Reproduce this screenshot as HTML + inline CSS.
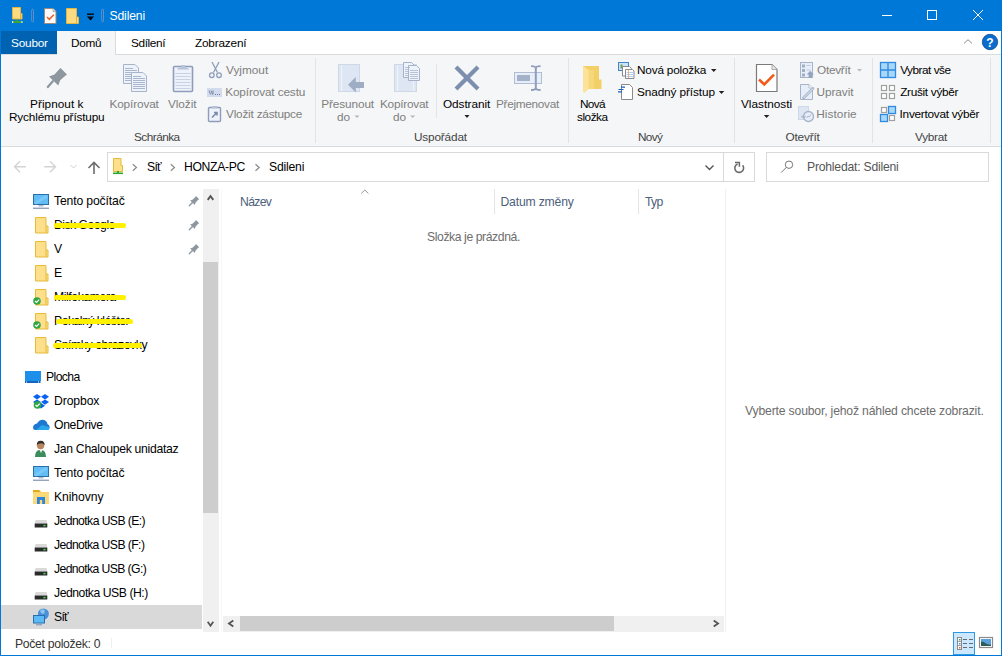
<!DOCTYPE html>
<html><head><meta charset="utf-8">
<style>
html,body{margin:0;padding:0;width:1002px;height:656px;overflow:hidden;background:#fff;}
body{position:relative;font-family:"Liberation Sans",sans-serif;font-size:11.5px;color:#000;}
.a{position:absolute;}
.t{position:absolute;white-space:nowrap;line-height:14px;font-size:11.8px;}
.d{color:#7e7e7e;}
.L{font-size:12.2px;}
.g{color:#444;}
#ic{position:absolute;left:0;top:0;}
</style></head><body>
<!-- window frame -->
<div class="a" style="left:0;top:0;width:1002px;height:31px;background:#0078d7"></div>

<!-- title -->
<div class="t L" style="left:109.5px;top:9px;color:#fff;letter-spacing:-0.15px">Sdileni</div>

<!-- tabs row -->
<div class="a" style="left:1px;top:31px;width:56px;height:23px;background:#0063b1"></div>
<div class="t" style="left:11.0px;top:36px;color:#fff;letter-spacing:-0.2px">Soubor</div>
<div class="a" style="left:1px;top:54px;width:1000px;height:1px;background:#dadbdc"></div>
<div class="a" style="left:57px;top:31px;width:58px;height:24px;background:#f5f6f7;border-right:1px solid #dadbdc"></div>
<div class="t" style="left:71.0px;top:36px;letter-spacing:-0.334px">Domů</div>
<div class="t" style="left:131.0px;top:36px;letter-spacing:-0.366px">Sdílení</div>
<div class="t" style="left:195.0px;top:36px;letter-spacing:-0.197px">Zobrazení</div>

<!-- ribbon body -->
<div class="a" style="left:1px;top:55px;width:1000px;height:91px;background:#f5f6f7"></div>
<div class="a" style="left:1px;top:146px;width:1000px;height:1px;background:#dadbdc"></div>
<!-- group separators -->
<div class="a" style="left:315px;top:58px;width:1px;height:85px;background:#e2e3e4"></div>
<div class="a" style="left:568px;top:58px;width:1px;height:85px;background:#e2e3e4"></div>
<div class="a" style="left:734px;top:58px;width:1px;height:85px;background:#e2e3e4"></div>
<div class="a" style="left:872px;top:58px;width:1px;height:85px;background:#e2e3e4"></div>
<div class="a" style="left:990px;top:58px;width:1px;height:85px;background:#e2e3e4"></div>
<div class="a" style="left:436px;top:64px;width:1px;height:54px;background:#e2e3e4"></div>

<!-- Schránka -->
<div class="t" style="left:30.0px;top:97px;letter-spacing:0.04px">Připnout k</div>
<div class="t" style="left:9.0px;top:110px;letter-spacing:-0.167px">Rychlému přístupu</div>
<div class="t d" style="left:109.4px;top:97px;letter-spacing:-0.125px">Kopírovat</div>
<div class="t d" style="left:168.0px;top:97px;letter-spacing:-0.08px">Vložit</div>
<div class="t d" style="left:226.0px;top:63px;letter-spacing:0.0px">Vyjmout</div>
<div class="t d" style="left:225.2px;top:85px;letter-spacing:-0.129px">Kopírovat cestu</div>
<div class="t d" style="left:226.0px;top:107px;letter-spacing:-0.214px">Vložit zástupce</div>
<div class="t g" style="left:134.0px;top:130px;letter-spacing:-0.53px">Schránka</div>

<!-- Uspořádat -->
<div class="t d" style="left:321.2px;top:97px;letter-spacing:-0.103px">Přesunout</div>
<div class="t d" style="left:337px;top:110px">do</div>
<div class="t d" style="left:380.0px;top:97px;letter-spacing:-0.25px">Kopírovat</div>
<div class="t d" style="left:393px;top:110px">do</div>
<div class="t" style="left:443.0px;top:97px;letter-spacing:-0.078px">Odstranit</div>
<div class="t d" style="left:496.0px;top:97px;letter-spacing:-0.3px">Přejmenovat</div>
<div class="t g" style="left:414.0px;top:130px;letter-spacing:-0.172px">Uspořádat</div>

<!-- Nový -->
<div class="t" style="left:580.0px;top:97px;letter-spacing:-0.7px">Nová</div>
<div class="t" style="left:577.0px;top:110px;letter-spacing:-0.48px">složka</div>
<div class="t" style="left:637.0px;top:63px;letter-spacing:-0.199px">Nová položka</div>
<div class="t" style="left:637.0px;top:85px;letter-spacing:-0.108px">Snadný přístup</div>
<div class="t g" style="left:638.0px;top:130px;letter-spacing:-0.7px">Nový</div>

<!-- Otevřít -->
<div class="t" style="left:741.0px;top:97px;letter-spacing:0.0px">Vlastnosti</div>
<div class="t d" style="left:817.0px;top:63px;letter-spacing:-0.268px">Otevřít</div>
<div class="t d" style="left:816.5px;top:85px;letter-spacing:-0.067px">Upravit</div>
<div class="t d" style="left:816.2px;top:107px;letter-spacing:0.07px">Historie</div>
<div class="t g" style="left:785.5px;top:130px;letter-spacing:-0.167px">Otevřít</div>

<!-- Vybrat -->
<div class="t" style="left:900.2px;top:63px;letter-spacing:-0.499px">Vybrat vše</div>
<div class="t" style="left:900.2px;top:85px;letter-spacing:-0.31px">Zrušit výběr</div>
<div class="t" style="left:899.6px;top:107px;letter-spacing:-0.267px">Invertovat výběr</div>
<div class="t g" style="left:915.0px;top:130px;letter-spacing:-0.28px">Vybrat</div>

<!-- address row -->
<div class="a" style="left:107px;top:152px;width:646px;height:28px;border:1px solid #d9d9d9"></div>
<div class="a" style="left:723px;top:153px;width:1px;height:28px;background:#d9d9d9"></div>
<div class="t L" style="left:147.0px;top:160px;letter-spacing:-0.7px">Síť</div>
<div class="t L" style="left:184.0px;top:160px;letter-spacing:-0.343px">HONZA-PC</div>
<div class="t L" style="left:269.0px;top:160px;letter-spacing:-0.199px">Sdileni</div>
<div class="a" style="left:766px;top:152px;width:221px;height:28px;border:1px solid #d9d9d9"></div>
<div class="t L" style="left:807.0px;top:160px;color:#555;letter-spacing:-0.224px">Prohledat: Sdileni</div>

<!-- nav pane -->
<div class="a" style="left:1px;top:605px;width:201px;height:24px;background:#d9d9d9"></div>
<div class="t L" style="left:54.0px;top:194px;letter-spacing:-0.146px">Tento počítač</div>
<div class="t L" style="left:54px;top:218px;letter-spacing:-0.5px">Disk Google</div>
<div class="t L" style="left:54px;top:242px">V</div>
<div class="t L" style="left:54px;top:266px">E</div>
<div class="t L" style="left:54px;top:290px;letter-spacing:-0.4px">Milfokamera</div>
<div class="t L" style="left:54px;top:314px;letter-spacing:-0.5px">Pokalný kléšter</div>
<div class="t L" style="left:54px;top:338px;letter-spacing:-0.4px">Snímky obrazovky</div>
<div class="t L" style="left:46.0px;top:370px;letter-spacing:-0.6px">Plocha</div>
<div class="t L" style="left:54.0px;top:394px;letter-spacing:-0.1px">Dropbox</div>
<div class="t L" style="left:54.0px;top:418px;letter-spacing:-0.343px">OneDrive</div>
<div class="t L" style="left:54.0px;top:442px;letter-spacing:-0.292px">Jan Chaloupek unidataz</div>
<div class="t L" style="left:54.0px;top:466px;letter-spacing:-0.162px">Tento počítač</div>
<div class="t L" style="left:54.0px;top:490px;letter-spacing:-0.093px">Knihovny</div>
<div class="t L" style="left:54.0px;top:514px;letter-spacing:-0.58px">Jednotka USB (E:)</div>
<div class="t L" style="left:54.0px;top:538px;letter-spacing:-0.581px">Jednotka USB (F:)</div>
<div class="t L" style="left:54.0px;top:562px;letter-spacing:-0.592px">Jednotka USB (G:)</div>
<div class="t L" style="left:54.0px;top:586px;letter-spacing:-0.455px">Jednotka USB (H:)</div>
<div class="t L" style="left:54.0px;top:610px;letter-spacing:-0.7px">Síť</div>
<!-- yellow marks -->
<div class="a" style="left:54px;top:223px;width:72px;height:5px;border-radius:3px;background:#fff100"></div>
<div class="a" style="left:54px;top:295px;width:72px;height:5px;border-radius:3px;background:#fff100"></div>
<div class="a" style="left:56px;top:319px;width:77px;height:5px;border-radius:3px;background:#fff100"></div>
<div class="a" style="left:53px;top:343px;width:89px;height:5px;border-radius:3px;background:#fff100"></div>

<!-- nav scrollbar -->
<div class="a" style="left:203px;top:189px;width:16px;height:443px;background:#f0f0f0"></div>
<div class="a" style="left:203px;top:262px;width:15px;height:251px;background:#cdcdcd"></div>
<div class="a" style="left:221px;top:189px;width:1px;height:443px;background:#f7f7f7"></div>

<!-- columns -->
<div class="t L" style="left:240.0px;top:195px;color:#4c607a;letter-spacing:-0.65px">Název</div>
<div class="a" style="left:494px;top:189px;width:1px;height:25px;background:#e5e5e5"></div>
<div class="t L" style="left:500.5px;top:195px;color:#4c607a;letter-spacing:-0.18px">Datum změny</div>
<div class="a" style="left:638px;top:189px;width:1px;height:25px;background:#e5e5e5"></div>
<div class="t L" style="left:645.0px;top:195px;color:#4c607a;letter-spacing:-0.7px">Typ</div>
<div class="t L" style="left:427.0px;top:230px;color:#6d6d6d;letter-spacing:-0.412px">Složka je prázdná.</div>
<div class="a" style="left:725px;top:189px;width:1px;height:443px;background:#f0f0f0"></div>
<div class="t L" style="left:745.0px;top:404px;color:#6d6d6d;letter-spacing:-0.168px">Vyberte soubor, jehož náhled chcete zobrazit.</div>

<!-- h scrollbar -->
<div class="a" style="left:223px;top:616px;width:501px;height:16px;background:#f0f0f0"></div>
<div class="a" style="left:240px;top:616px;width:374px;height:15px;background:#cdcdcd"></div>

<!-- status bar -->
<div class="t L" style="left:15.0px;top:637px;color:#333;letter-spacing:-0.308px">Počet položek: 0</div>
<div class="a" style="left:111px;top:638px;width:1px;height:10px;background:#f0f0f0"></div>
<div class="a" style="left:953px;top:632px;width:20px;height:21px;border:1px solid #2f9ae2;background:#cce8ff"></div>

<div class="a" style="left:0;top:0;width:1px;height:656px;background:#0078d7"></div>
<div class="a" style="left:1001px;top:0;width:1px;height:656px;background:#0078d7"></div>
<div class="a" style="left:0;top:655px;width:1002px;height:1px;background:#0078d7"></div>

<svg id="ic" width="1002" height="656" viewBox="0 0 1002 656">
<!-- QAT -->
<g>
 <path d="M12.5,7.5 h8 v6 h1.5 v5.5 h-9.5z" fill="#fbdc82" stroke="#e2b440" stroke-width="1"/>
 <path d="M20.5,13.5 v5.5" stroke="#e2b440" stroke-width="1"/>
 <rect x="16.5" y="19.5" width="1.6" height="2" fill="#3aa63a"/>
 <rect x="12" y="21" width="10.5" height="2" fill="#3aa63a"/>
 <rect x="12" y="21" width="1.2" height="2" fill="#cfe8cf"/>
 <rect x="21.3" y="21" width="1.2" height="2" fill="#cfe8cf"/>
 <rect x="31.7" y="9.2" width="1.8" height="12.6" rx="0.9" fill="#1a68b8" stroke="#6aa8e0" stroke-width="0.7"/>
 <path d="M44.5,8.5 h8.5 l3,3 v12 h-11.5z" fill="#fafafa" stroke="#9a8a80" stroke-width="1"/>
 <path d="M53,8.5 v3 h3" fill="#e0e0e0" stroke="#9a8a80" stroke-width="0.6"/>
 <path d="M47,17 l2.3,2.3 l4.5,-4.5" fill="none" stroke="#f0622a" stroke-width="1.6"/>
 <path d="M66.5,8.5 h10 v8.5 h2 v6.5 h-12z" fill="#fbdc82" stroke="#e2b440" stroke-width="1"/>
 <path d="M76.5,17 v6.5" stroke="#e2b440" stroke-width="1"/>
 <rect x="87" y="13.5" width="7" height="1.3" fill="#000"/>
 <path d="M87,16.5 h7 l-3.5,4z" fill="#000"/>
 <rect x="101.7" y="9.2" width="1.8" height="12.6" rx="0.9" fill="#1a68b8" stroke="#6aa8e0" stroke-width="0.7"/>
</g>
<!-- window controls -->
<g stroke="#fff" stroke-width="1" fill="none">
 <path d="M882,15.5 h10"/>
 <rect x="927.5" y="10.5" width="9" height="9"/>
 <path d="M973,10 l10,10 M983,10 l-10,10"/>
</g>
<!-- ribbon chevron + help -->
<path d="M964,43.5 l4,-3.8 l4,3.8" fill="none" stroke="#8a8a8a" stroke-width="1"/>
<circle cx="990" cy="42" r="7.7" fill="#0a6ccd" stroke="#0b4c93" stroke-width="0.8"/>
<text x="990" y="47" font-family="Liberation Sans" font-weight="bold" font-size="12" fill="#fff" text-anchor="middle">?</text>

<!-- pin -->
<path d="M60.5,68 L67,74.5 L65,76 L60.2,80.3 L58.3,85.6 L49,76.6 L54.5,74.6 L58.8,69.8 Z" fill="#8e979e"/>
<path d="M52.8,81.2 L47.8,87" stroke="#8e979e" stroke-width="2.2" stroke-linecap="round"/>
<!-- copy -->
<g stroke="#a6b3c9" stroke-width="1" fill="#eef2fa">
 <path d="M123.5,64.5 h11.5 l3.5,3.5 v15.5 h-15z"/>
 <path d="M131.5,72.5 h11.5 l3.5,3.5 v15.5 h-15z"/>
</g>
<g stroke="#aab6cb" stroke-width="1">
 <path d="M125,68.5h8 M125,70.5h12 M125,72.5h6 M125,74.5h6 M125,76.5h6 M125,78.5h6 M125,80.5h6"/>
 <path d="M133,76.5h8 M133,78.5h12 M133,80.5h12 M133,82.5h12 M133,84.5h12 M133,86.5h12 M133,88.5h12"/>
</g>
<!-- paste clipboard -->
<rect x="173.5" y="66.5" width="19" height="25" rx="1" fill="#eef2fa" stroke="#8f9dbb" stroke-width="1.6"/>
<path d="M177,69.5 h12 l-1.5,-2 h-2.5 v-2.5 h-4 v2.5 h-2.5z" fill="#b7c3d8"/>
<g stroke="#c9d2e2" stroke-width="1">
 <path d="M175.5,73.5h15 M175.5,76.5h15 M175.5,79.5h15 M175.5,82.5h15 M175.5,85.5h15 M175.5,88.5h15"/>
</g>
<!-- scissors -->
<g stroke="#8f9dbb" stroke-width="1.3" fill="none">
 <path d="M212,62 L217.5,72.5 M219,62 L213.5,72.5"/>
 <circle cx="211.8" cy="75.2" r="2.3"/>
 <circle cx="219" cy="75.2" r="2.3"/>
</g>
<!-- kopirovat cestu -->
<rect x="207" y="88" width="15" height="9" fill="#d3dcec"/>
<path d="M209,90.5 l1.5,4 M211,90.5 l1.5,4 M213,90.5 v4" stroke="#6e7f9f" stroke-width="0.9"/>
<path d="M215,94.5h1 M217,94.5h1 M219,94.5h1" stroke="#6e7f9f" stroke-width="1"/>
<!-- vlozit zastupce -->
<rect x="208.5" y="107.5" width="12" height="14" rx="1" fill="#eef2fa" stroke="#8f9dbb" stroke-width="1.4"/>
<rect x="212" y="106" width="5" height="2.5" fill="#b7c3d8"/>
<path d="M212,117.5 l5,-5 M214,112.5 h3 v3" stroke="#7a8aa8" stroke-width="1.6" fill="none"/>
<!-- presunout do -->
<rect x="338.5" y="64.5" width="21" height="27" fill="#dde6f2" stroke="#cdd8e8"/>
<path d="M341.5,65 v26" stroke="#eef2f9" stroke-width="1.2"/>
<path d="M348,84.7 L355.8,77 V82 H364 V88 H355.8 V92.5 Z" fill="#9eacc4"/>
<!-- kopirovat do -->
<rect x="394.5" y="64.5" width="22" height="27" fill="#dde6f2" stroke="#cdd8e8"/>
<path d="M397.5,65 v26 M413.5,80 v11" stroke="#eef2f9" stroke-width="1.2"/>
<g stroke="#a6b3c9" stroke-width="1" fill="#eef2fa">
 <path d="M403.5,62.5 h8 l3,3 v12 h-11z"/>
 <path d="M408.5,65.5 h8 l3,3 v12 h-11z"/>
</g>
<path d="M405,67.5h5 M405,69.5h4 M405,71.5h4 M405,73.5h4 M405,75.5h4 M410,70.5h8 M410,72.5h8 M410,74.5h8 M410,76.5h8 M410,78.5h8" stroke="#aab6cb" stroke-width="0.8"/>
<!-- odstranit X -->
<path d="M456,67 L478,89 M478,67 L456,89" stroke="#7d8fae" stroke-width="4.2"/>
<path d="M464.5,115 h5 l-2.5,3z" fill="#222"/>
<path d="M354.5,115.5 h5 l-2.5,2.5z" fill="#b5b5b5"/>
<path d="M410.2,115.5 h5 l-2.5,2.5z" fill="#b5b5b5"/>
<!-- prejmenovat -->
<rect x="514.5" y="72.5" width="27" height="11" fill="#e8eef9" stroke="#b0bdd3"/>
<rect x="517" y="75" width="13" height="6" fill="#a3b1c9"/>
<path d="M535.8,67 V89.5" stroke="#8f9dbb" stroke-width="2" fill="none"/><path d="M531,66.2 q4.8,0 4.8,2 q0,-2 4.8,-2 M531,90 q4.8,0 4.8,-2 q0,2 4.8,2" stroke="#8f9dbb" stroke-width="1.8" fill="none"/>
<!-- nova slozka -->
<path d="M583,66 H599 V79.5 H601.5 V89 H583 Z" fill="#f3cf68"/>
<path d="M588.7,70 H594 V89 H588.7Z" fill="#f7d878"/>
<path d="M583,66 L588.7,70 V89 L584.5,93 L583,92 Z" fill="#fde39a"/>
<!-- nova polozka -->
<rect x="618.5" y="62.5" width="10" height="8" fill="#cde4f7" stroke="#3f87c8"/>
<rect x="620.5" y="64.5" width="2" height="4" fill="#6ba050"/>
<path d="M622.5,66.5 h7 l2,2 v7.5 h-9z" fill="#fff" stroke="#8a8a8a"/>
<path d="M625.5,69.5 h7 l1.5,1.5 v7.5 h-8.5z" fill="#fff" stroke="#8a8a8a"/>
<path d="M626.5,72.5h7 M626.5,74.5h7 M626.5,76.5h7" stroke="#9cc3e8" stroke-width="0.8"/>
<path d="M628.5,70 v8" stroke="#f0a080" stroke-width="0.8"/>
<!-- snadny pristup -->
<path d="M621.5,84.5 h8 l3,3 v12 h-11z" fill="#fff" stroke="#8a8a8a"/>
<path d="M621,87.2 h4 M618.5,89.5 h5 M618,91.8 h4" stroke="#1a62b8" stroke-width="1.2"/>
<path d="M711,69 h5.5 l-2.75,3z" fill="#222"/>
<path d="M718.8,91 h5.5 l-2.75,3z" fill="#222"/>
<!-- vlastnosti -->
<path d="M756.5,64.5 h15.5 l5,5 v22 h-20.5z" fill="#fff" stroke="#7a7a7a" stroke-width="1.2"/>
<path d="M772,64.5 v5 h5" fill="#e8e8e8" stroke="#9a9a9a" stroke-width="0.8"/>
<path d="M759,79.5 L764.3,84.4 L774,74.6" fill="none" stroke="#f25a1c" stroke-width="2.6"/>
<path d="M763.8,115 h5.6 l-2.8,3z" fill="#222"/>
<!-- otevrit small -->
<rect x="800.5" y="62.5" width="12" height="15" fill="#e8eef9" stroke="#a6b3c9"/>
<path d="M802,64.5h3v3h-3z M802,69h3v3h-3z M802,73.5h3v3h-3z" fill="#a0aec6"/>
<path d="M806.5,65.5h4 M806.5,70h4" stroke="#c0cadb"/>
<path d="M808.6,78 v-3.6 h-1.9 l3.6,-3.6 l3.6,3.6 h-1.9 v3.6z" fill="#94a3bf"/>
<path d="M857,69 h5 l-2.5,2.5z" fill="#b8b8b8"/>
<!-- upravit -->
<path d="M800.5,84.5 h8.5 l3.5,3.5 v11.5 h-12z" fill="#e8eef9" stroke="#a6b3c9"/>
<path d="M809,84.5 v3.5 h3.5" fill="#fff" stroke="#a6b3c9" stroke-width="0.8"/>
<path d="M803.5,98 l9.5,-9.5" stroke="#a6b3c9" stroke-width="2.6" stroke-linecap="round"/>
<path d="M803.5,98 l9.5,-9.5" stroke="#e8eef9" stroke-width="1"/>
<!-- historie -->
<rect x="798.5" y="106.5" width="10" height="13" fill="#dde6f2" stroke="#cdd8e8"/>
<circle cx="808.5" cy="116.5" r="5" fill="#e8eef9" stroke="#a6b3c9" stroke-width="1.3"/>
<path d="M806.5,118 l1.5,-2 l1.2,1 l1.8,-2.5" stroke="#a6b3c9" stroke-width="0.9" fill="none"/>
<path d="M801.5,116 l2,2 l2,-2" stroke="#a6b3c9" stroke-width="1.1" fill="none"/>
<!-- vybrat vse -->
<rect x="880.5" y="62.5" width="15" height="15" fill="#a8d8f8" stroke="#2f8ae0" stroke-width="1.3"/>
<path d="M888,62 v16 M880,70 h16" stroke="#2f8ae0" stroke-width="1.3"/>
<g fill="#fff" stroke="#a0a0a0" stroke-width="1.2">
 <rect x="881.5" y="85.5" width="5" height="5"/><rect x="889.5" y="85.5" width="5" height="5"/>
 <rect x="881.5" y="93.5" width="5" height="5"/><rect x="889.5" y="93.5" width="5" height="5"/>
 <rect x="881.5" y="107.5" width="5" height="5"/><rect x="889.5" y="115.5" width="5" height="5"/>
</g>
<g fill="#a8d8f8" stroke="#2f8ae0" stroke-width="1.3">
 <rect x="888.5" y="106.5" width="7" height="7"/><rect x="880.5" y="114.5" width="7" height="7"/>
</g>
<path d="M14.5,166.7 H25.8 M20,161.2 L14.5,166.7 L20,172.2" stroke="#d3d3d3" stroke-width="1.4" fill="none"/>
<path d="M44.2,166.7 H55.5 M50,161.2 L55.5,166.7 L50,172.2" stroke="#d3d3d3" stroke-width="1.4" fill="none"/>
<path d="M70.5,165 L73.5,168 L76.5,165" stroke="#d0d0d0" stroke-width="1" fill="none"/>
<path d="M94,162.5 V174 M88.5,168 L94,162.5 L99.5,168" stroke="#6d6d6d" stroke-width="1.6" fill="none"/>
<path d="M113.5,158.5 h7.5 v7 h1.5 v6 h-9z" fill="#fddf8c" stroke="#e6bb3c"/>
<rect x="117" y="171" width="2" height="2" fill="#2ea82e"/><rect x="113" y="172.5" width="10" height="1.6" fill="#2ea82e"/>
<path d="M132.8,164.2 L136.5,167.5 L132.8,170.8" stroke="#8a8a8a" stroke-width="1.2" fill="none"/>
<path d="M170.8,164.2 L174.5,167.5 L170.8,170.8" stroke="#8a8a8a" stroke-width="1.2" fill="none"/>
<path d="M255.5,164.2 L259.2,167.5 L255.5,170.8" stroke="#8a8a8a" stroke-width="1.2" fill="none"/>
<path d="M705.5,165.5 L709.5,169.5 L713.5,165.5" stroke="#555" stroke-width="1.4" fill="none"/>
<path d="M742.6,165.2 A4.4,4.4 0 1 1 737.6,163.9" stroke="#6a6a6a" stroke-width="1.6" fill="none"/>
<path d="M735,162.6 H739.4 V166.8" stroke="#6a6a6a" stroke-width="1.5" fill="none"/>
<circle cx="789" cy="164.7" r="3.7" stroke="#777" stroke-width="1" fill="none"/><path d="M786.3,167.4 L781.2,172.5" stroke="#777" stroke-width="1"/>
<rect x="33.5" y="194.5" width="15" height="10" fill="#62bdf6" stroke="#2b6fa8" stroke-width="1"/>
<path d="M35,203.5 L47,196" stroke="#8fd3fb" stroke-width="3" opacity="0.5"/>
<rect x="38.5" y="205.2" width="5" height="1.2" fill="#9aa8c2"/>
<rect x="33" y="207.6" width="16" height="1.3" fill="#8a9ab8"/>
<path d="M35.5,217.5 h10.5 v8.5 h2 v7 h-12.5z" fill="#fddf8c" stroke="#e6bb3c" stroke-width="1"/>
<path d="M46,226 v7" stroke="#e6bb3c" stroke-width="1"/>
<path d="M35.5,241.5 h10.5 v8.5 h2 v7 h-12.5z" fill="#fddf8c" stroke="#e6bb3c" stroke-width="1"/>
<path d="M46,250 v7" stroke="#e6bb3c" stroke-width="1"/>
<path d="M35.5,265.5 h10.5 v8.5 h2 v7 h-12.5z" fill="#fddf8c" stroke="#e6bb3c" stroke-width="1"/>
<path d="M46,274 v7" stroke="#e6bb3c" stroke-width="1"/>
<path d="M35.5,289.5 h10.5 v8.5 h2 v7 h-12.5z" fill="#fddf8c" stroke="#e6bb3c" stroke-width="1"/>
<path d="M46,298 v7" stroke="#e6bb3c" stroke-width="1"/>
<path d="M35.5,313.5 h10.5 v8.5 h2 v7 h-12.5z" fill="#fddf8c" stroke="#e6bb3c" stroke-width="1"/>
<path d="M46,322 v7" stroke="#e6bb3c" stroke-width="1"/>
<path d="M35.5,337.5 h10.5 v8.5 h2 v7 h-12.5z" fill="#fddf8c" stroke="#e6bb3c" stroke-width="1"/>
<path d="M46,346 v7" stroke="#e6bb3c" stroke-width="1"/>
<circle cx="37" cy="301" r="3.8" fill="#2fa640"/>
<path d="M35,301 l1.5,1.5 l2.7,-2.8" stroke="#fff" stroke-width="1.2" fill="none"/>
<circle cx="37" cy="325" r="3.8" fill="#2fa640"/>
<path d="M35,325 l1.5,1.5 l2.7,-2.8" stroke="#fff" stroke-width="1.2" fill="none"/>
<path d="M196,196 L199.2,199.2 L198,200 L195.6,202.4 L194.8,205 L190.2,200.4 L192.8,199.6 L195.2,197.2Z" fill="#8e979e"/>
<path d="M192.2,202.8 L189.3,205.7" stroke="#8e979e" stroke-width="1.3" stroke-linecap="round"/>
<path d="M196,220 L199.2,223.2 L198,224 L195.6,226.4 L194.8,229 L190.2,224.4 L192.8,223.6 L195.2,221.2Z" fill="#8e979e"/>
<path d="M192.2,226.8 L189.3,229.7" stroke="#8e979e" stroke-width="1.3" stroke-linecap="round"/>
<path d="M196,244 L199.2,247.2 L198,248 L195.6,250.4 L194.8,253 L190.2,248.4 L192.8,247.6 L195.2,245.2Z" fill="#8e979e"/>
<path d="M192.2,250.8 L189.3,253.7" stroke="#8e979e" stroke-width="1.3" stroke-linecap="round"/>
<rect x="25" y="371" width="16" height="12" fill="#1e90ea"/><rect x="25" y="381" width="16" height="2" fill="#1565b8"/><rect x="26" y="381.5" width="1" height="1" fill="#fff"/><rect x="38" y="381.5" width="1" height="1" fill="#fff"/><rect x="40" y="381.5" width="1" height="1" fill="#fff"/>
<g fill="#0a62f5"><path d="M37,394 l4,2.7 l-4,2.7 l-4,-2.7z"/><path d="M45,394 l4,2.7 l-4,2.7 l-4,-2.7z"/><path d="M37,399.4 l4,2.7 l-4,2.7 l-4,-2.7z"/><path d="M45,399.4 l4,2.7 l-4,2.7 l-4,-2.7z"/><path d="M41,403 l4,2.7 l-4,2.7 l-4,-2.7z"/></g>
<circle cx="37.5" cy="405" r="3.8" fill="#2fa640"/>
<path d="M35.5,405 l1.5,1.5 l2.7,-2.8" stroke="#fff" stroke-width="1.2" fill="none"/>
<path d="M33,428 q0,-4 4,-4.5 q2,-4 6,-3.8 q4,0.5 4.5,4.5 q2.3,0.5 2,3.5 q-0.2,2.3 -2.5,2.3 h-11.5 q-2.5,0 -2.5,-2z" fill="#1f78d1"/><path d="M36,430 l6,-5 l7.5,2.3 q0.2,2.7 -2,2.7z" fill="#28a8ea"/>
<path d="M35,457 q0,-6 4,-7 h3 q4,1 4,7z" fill="#3c8b5c"/><path d="M39.5,450 l1.5,3 l1.5,-3z" fill="#eee"/><circle cx="40.6" cy="445.5" r="3.7" fill="#b8855c"/><path d="M36.8,445 q0,-4.5 4,-4.3 q4,0 3.8,4.5 q-1,-2 -3.5,-2 q-2.5,0 -4.3,1.8z" fill="#2f2f2f"/>
<rect x="33.5" y="466.5" width="15" height="10" fill="#62bdf6" stroke="#2b6fa8" stroke-width="1"/>
<path d="M35,475.5 L47,468" stroke="#8fd3fb" stroke-width="3" opacity="0.5"/>
<rect x="38.5" y="477.2" width="5" height="1.2" fill="#9aa8c2"/>
<rect x="33" y="479.6" width="16" height="1.3" fill="#8a9ab8"/>
<path d="M33,490 h6 l2,2 h8 v12 h-16z" fill="#fbd56a"/><path d="M33,490 h6 l2,2 h-8z" fill="#e2a91b"/><path d="M33,493 h16 v11 h-16z" fill="#fcd977"/><path d="M37,504 v-7 h8 v7 h-2.8 v-4 h-2.4 v4z" fill="#2c83e0"/>
<path d="M35.5,520 h11 l0.8,3.5 h-12.6z" fill="#d9d9d9"/>
<rect x="34.7" y="523.5" width="12.6" height="4" fill="#2b2b2b"/>
<rect x="43.5" y="524.8" width="2" height="1.6" fill="#3de03d"/>
<path d="M35.5,544 h11 l0.8,3.5 h-12.6z" fill="#d9d9d9"/>
<rect x="34.7" y="547.5" width="12.6" height="4" fill="#2b2b2b"/>
<rect x="43.5" y="548.8" width="2" height="1.6" fill="#3de03d"/>
<path d="M35.5,568 h11 l0.8,3.5 h-12.6z" fill="#d9d9d9"/>
<rect x="34.7" y="571.5" width="12.6" height="4" fill="#2b2b2b"/>
<rect x="43.5" y="572.8" width="2" height="1.6" fill="#3de03d"/>
<path d="M35.5,592 h11 l0.8,3.5 h-12.6z" fill="#d9d9d9"/>
<rect x="34.7" y="595.5" width="12.6" height="4" fill="#2b2b2b"/>
<rect x="43.5" y="596.8" width="2" height="1.6" fill="#3de03d"/>
<circle cx="43.4" cy="614" r="5.5" fill="#4a8fd8"/><path d="M40,611 q2,-3 4.5,-1 q1,3 -1.5,4 q-2,0 -3,-3z" fill="#9fd2f0" opacity="0.8"/>
<rect x="33.5" y="615.5" width="11" height="7.5" fill="#5dbaf6" stroke="#2571b0"/><rect x="36" y="624.3" width="6" height="1" fill="#7a8fb5"/>
<path d="M207.7,199.9 L210.5,196.1 L213.3,199.9" stroke="#555" stroke-width="1.8" fill="none"/>
<path d="M207.7,621.8 L210.5,625.7 L213.3,621.8" stroke="#555" stroke-width="1.8" fill="none"/>
<path d="M233.3,620.6 L229,623.5 L233.3,626.4" stroke="#555" stroke-width="1.8" fill="none"/>
<path d="M713.7,620.6 L718,623.5 L713.7,626.4" stroke="#555" stroke-width="1.8" fill="none"/>
<path d="M361.2,193.5 L364.8,190 L368.4,193.5" stroke="#888" stroke-width="0.9" fill="none"/>
<rect x="957.5" y="637.5" width="4" height="12" fill="#fff" stroke="#8a8a8a"/><path d="M957.5,641.5h4 M957.5,645.5h4" stroke="#8a8a8a" stroke-width="0.8"/>
<rect x="959" y="639" width="1.5" height="1.5" fill="#2e9e5a"/><rect x="959" y="643" width="1.5" height="1.5" fill="#4a86e8"/><rect x="959" y="647" width="1.5" height="1.5" fill="#f0622a"/>
<path d="M963,639.5 h4 M969,639.5 h4 M963,643.5 h4 M969,643.5 h4 M963,647.5 h4 M969,647.5 h4" stroke="#6a6a6a" stroke-width="1.2"/>
<rect x="979.5" y="637.5" width="13" height="10" fill="#fff" stroke="#8a8a8a" stroke-width="1.2"/><rect x="981" y="639" width="10" height="7" fill="#5aa0dc"/><path d="M981,641.5 q3,0 5,2 q2,1.5 5,1 v1.5 h-10z" fill="#2e5a5a"/>
</svg>
</body></html>
